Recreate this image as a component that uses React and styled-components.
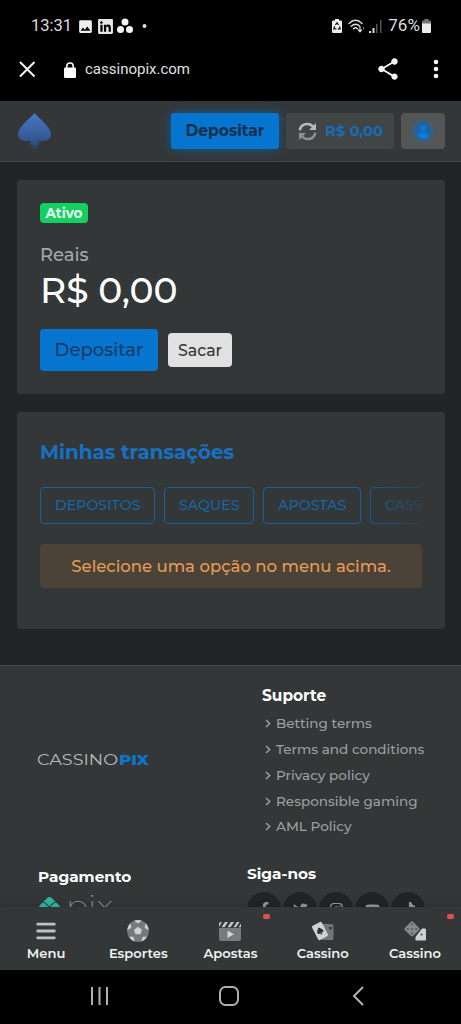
import React from 'react';
import styled, { createGlobalStyle } from 'styled-components';
import { FaFacebookF, FaTwitter, FaInstagram, FaYoutube, FaTiktok, FaLinkedin } from 'react-icons/fa';
import { FaPix } from 'react-icons/fa6';
import { MdImage, MdShare } from 'react-icons/md';

const Global = createGlobalStyle`
  *, *::before, *::after { box-sizing: border-box; }
  body { margin: 0; background: #000; overflow: hidden; }
  button { border: 0; padding: 0; font: inherit; color: inherit; white-space: nowrap; }
  h2, h3, p, ul { margin: 0; padding: 0; font: inherit; }
  svg { display: block; flex: none; }
`;

const Screen = styled.div`
  width: 461px;
  height: 1024px;
  display: flex;
  flex-direction: column;
  overflow: hidden;
  background: #212526;
  font-family: Montserrat, Inter, sans-serif;
`;

const Text = styled.span`
  display: block;
  flex: none;
  white-space: nowrap;
  font-size: ${(p) => p.$size}px;
  font-weight: ${(p) => p.$weight || 500};
  color: ${(p) => p.$color || 'inherit'};
  line-height: ${(p) => p.$line || p.$size * 1.25}px;
  letter-spacing: ${(p) => p.$track || 0}px;
`;

const StatusBar = styled.div`
  height: 41px;
  flex: none;
  padding: 11px 30px 0 31px;
  display: flex;
  align-items: center;
  background: #000;
  color: #dcdcdc;
  font-family: Roboto, sans-serif;
`;
const StatusIcons = styled.div`
  display: flex;
  align-items: center;
  gap: 3px;
  margin-left: 5px;
  flex: 1;
`;
const StatusRight = styled.div`
  display: flex;
  align-items: center;
  gap: 6px;
`;
const BatteryIcon = styled.svg`
  margin-left: -4px;
`;
const SignalIcon = styled.svg`
  margin-left: -2px;
`;
const UrlBar = styled.div`
  height: 60px;
  flex: none;
  padding: 0 20px 4px 18px;
  display: flex;
  align-items: center;
  background: #000;
  color: #e0e0e0;
  font-family: Roboto, sans-serif;
`;
const Address = styled.div`
  display: flex;
  align-items: center;
  gap: 9px;
  flex: 1;
  margin-left: 28px;
  padding-top: 1px;
`;
const UrlActions = styled.div`
  display: flex;
  align-items: center;
  gap: 30px;
`;

const Header = styled.header`
  height: 61px;
  flex: none;
  padding: 0 16px 0 17px;
  display: flex;
  align-items: center;
  gap: 7px;
  background: #333738;
  border-bottom: 1px solid #46494a;
`;
const Brand = styled.div`
  flex: 1;
`;
const DepositTop = styled.button`
  width: 108px;
  height: 36px;
  display: grid;
  place-items: center;
  border-radius: 3px;
  background: #0675d0;
  color: #16304b;
  box-shadow: 0 0 11px rgba(0, 119, 215, 0.55);
`;
const Balance = styled.div`
  width: 108px;
  height: 36px;
  padding-left: 12px;
  display: flex;
  align-items: center;
  gap: 8px;
  border-radius: 3px;
  background: #424545;
`;
const Profile = styled.button`
  width: 44px;
  height: 36px;
  display: grid;
  place-items: center;
  border-radius: 4px;
  background: #545656;
`;
const Glow = styled.svg`
  filter: drop-shadow(0 0 3px #0077d7) blur(0.6px);
`;

const Main = styled.main`
  height: 503px;
  flex: none;
  padding: 18px 16px 0 17px;
  display: flex;
  flex-direction: column;
  gap: 18px;
`;
const Card = styled.section`
  height: ${(p) => p.$height}px;
  padding: 24px 23px 0 23px;
  display: flex;
  flex-direction: column;
  background: #333738;
  border-radius: 4px;
`;
const Badge = styled.span`
  width: 48px;
  height: 20px;
  flex: none;
  display: grid;
  place-items: center;
  border-radius: 4px;
  background: #14cf62;
  margin: -1px 0 21px;
`;
const Actions = styled.div`
  display: flex;
  align-items: center;
  gap: 10px;
  margin-top: 15px;
`;
const ActionButton = styled.button`
  width: ${(p) => (p.$primary ? 118 : 64)}px;
  height: ${(p) => (p.$primary ? 42 : 34)}px;
  display: grid;
  place-items: center;
  border-radius: 4px;
  background: ${(p) => (p.$primary ? '#0675d0' : '#e1e1e1')};
  color: ${(p) => (p.$primary ? '#173c66' : '#333738')};
`;
const Tabs = styled.div`
  display: flex;
  gap: 9px;
  overflow: hidden;
  margin-top: 18px;
  flex: none;
  mask-image: linear-gradient(to right, #000 84%, transparent 104%);
`;
const Tab = styled.button`
  width: ${(p) => p.$width}px;
  height: 37px;
  flex: none;
  display: grid;
  place-items: center;
  border: 1px solid #175f9d;
  border-radius: 4px;
  background: transparent;
  color: #1766aa;
`;
const Notice = styled.div`
  height: 44px;
  margin-top: 20px;
  display: grid;
  place-items: center;
  border-radius: 4px;
  background: #4b4238;
  color: #e59b56;
`;

const Footer = styled.footer`
  height: 242px;
  flex: none;
  overflow: hidden;
  border-top: 1px solid #46494a;
  background: #333738;
`;
const FooterTop = styled.div`
  height: 196px;
  display: flex;
  padding-left: 37px;
`;
const LogoCell = styled.div`
  width: 225px;
  padding-top: 85px;
`;
const Support = styled.div`
  padding-top: 20px;
`;
const Links = styled.ul`
  list-style: none;
  margin-top: 5px;
`;
const LinkItem = styled.li`
  height: 25.75px;
  padding-left: 3px;
  display: flex;
  align-items: center;
  gap: 5px;
  color: #9c9fa0;
`;
const FooterBottom = styled.div`
  display: flex;
  padding-left: 38px;
`;
const Payment = styled.div`
  width: 209px;
  padding-top: 5px;
`;
const PixLogo = styled.div`
  display: flex;
  gap: 6px;
  margin-top: 10px;
  padding-left: 1px;
  color: #30b9a4;
`;
const Follow = styled.div`
  padding-top: 2px;
`;
const Socials = styled.div`
  display: flex;
  gap: 2px;
  margin-top: 8px;
`;
const Social = styled.a`
  width: 34px;
  height: 34px;
  display: grid;
  place-items: center;
  border-radius: 50%;
  background: #212526;
  color: #97999a;
`;

const BottomNav = styled.nav`
  height: 63px;
  flex: none;
  display: grid;
  grid-template-columns: repeat(5, 1fr);
  background: #333738;
  box-shadow: 0 -2px 10px rgba(0, 0, 0, 0.14);
  position: relative;
`;
const NavItem = styled.div`
  position: relative;
  display: flex;
  flex-direction: column;
  align-items: center;
  gap: 3px;
  padding-top: 12px;
  color: #f1f1f1;
`;
const Dot = styled.i`
  position: absolute;
  top: 7px;
  right: 7px;
  width: 7px;
  height: 5px;
  border-radius: 2px;
  background: #e05147;
`;
const SystemNav = styled.div`
  height: 54px;
  flex: none;
  padding: 16px 97px 0 90px;
  display: flex;
  justify-content: space-between;
  background: #000;
`;
const HomeIcon = styled.svg`
  margin-right: 5px;
`;

const Spade = () => (
  <svg width="34" height="38" viewBox="0 0 34 38">
    <defs>
      <linearGradient id="spade" x1="0" y1="0" x2="0" y2="1">
        <stop offset="0" stopColor="#4778c9" />
        <stop offset="0.75" stopColor="#34568f" />
        <stop offset="1" stopColor="#263f66" />
      </linearGradient>
    </defs>
    <path fill="url(#spade)" d="M17.500 1C14 6 2 13.500 1 22C.5 28 8 30.500 14.500 28.500C12.500 30 12.500 32.500 14.500 33.500C15.500 34.500 15 35.500 14.500 36.500H20.500C20 35.500 19.500 34.500 20.500 33.500C22.500 32.500 22.500 30 20.500 28.500C27 30.500 34.500 28 34 22C33 13.500 21 6 17.500 1Z" />
  </svg>
);

const MenuIcon = () => (
  <svg width="24" height="24" viewBox="0 0 24 24" stroke="#bfc1c1" strokeWidth="2.800" strokeLinecap="round">
    <path d="M3.700 5.200H20.300M3.700 12H20.300M3.700 18.800H20.300" />
  </svg>
);
const BallIcon = () => (
  <svg width="24" height="24" viewBox="0 0 24 24">
    <circle cx="12" cy="12" r="10.900" fill="#74797a" />
    <g fill="#cfd1d1">
      <path d="M12 7.800L16 10.700L14.500 15.300H9.500L8 10.700Z" />
      <path d="M8.200 1.800Q12 .3 15.800 1.800L12 4.600Z" />
      <path d="M1.200 11.200Q1.400 7.200 4.300 4.300L5.400 8.700Z" />
      <path d="M22.800 11.200Q22.600 7.200 19.700 4.300L18.600 8.700Z" />
      <path d="M2.900 17.800Q5 21.300 8.700 22.400L7.400 17.800Z" />
      <path d="M21.100 17.800Q19 21.300 15.300 22.400L16.600 17.800Z" />
    </g>
  </svg>
);
const ClapIcon = () => (
  <svg width="24" height="24" viewBox="0 0 24 24">
    <path fill="#777b7b" d="M1 9H23V20Q23 22 21 22H3Q1 22 1 20Z" />
    <path fill="#c8caca" d="M1 8V5Q1 3 3 3H4L1 8ZM7 3H10L6.500 8.200H3.500ZM13 3H16L12.500 8.200H9.500ZM19 3H21.500L18 8.200H15.500ZM23 4.500V8.200H20.500Z" />
    <path fill="#d3d5d5" d="M9.500 11.500L16 15.300L9.500 19Z" />
  </svg>
);
const CardsIcon = () => (
  <svg width="24" height="24" viewBox="0 0 24 24">
    <rect x="10" y="5" width="12.500" height="16" rx="1.500" fill="#717576" />
    <path d="M19.500 10.700C17.800 9.500 17.300 8.700 18.200 8.100C18.800 7.700 19.400 8.200 19.500 8.600C19.700 8.100 20.300 7.700 20.900 8.100C21.700 8.700 21.200 9.500 19.500 10.700Z" fill="#303435" />
    <g transform="rotate(-27 9 12)">
      <rect x="3.500" y="4" width="11" height="16" rx="1.500" fill="#d0d2d2" />
      <path d="M9 8.200C8 9.800 5.700 11 5.700 12.800C5.700 14.500 7.800 14.700 8.600 13.700L8 15.600H10L9.400 13.700C10.200 14.700 12.300 14.500 12.300 12.800C12.300 11 10 9.800 9 8.200Z" fill="#303435" />
    </g>
  </svg>
);
const DiceIcon = () => (
  <svg width="24" height="24" viewBox="0 0 24 24">
    <rect x="3.200" y="4.200" width="11.500" height="11.500" rx="1.400" transform="rotate(45 8.950 10)" fill="#85898a" />
    <g fill="#505556">
      <circle cx="9" cy="5.500" r="1" /><circle cx="4.800" cy="10" r="1" /><circle cx="9" cy="10" r="1" />
      <circle cx="13.200" cy="10" r="1" /><circle cx="9" cy="14.500" r="1" />
    </g>
    <path fill="#cfd1d1" d="M19 9.500H22Q23 9.500 23 10.500V20.500Q23 21.500 22 21.500H12.500V18Z" />
    <circle cx="18.500" cy="15.500" r="1" fill="#44494a" />
  </svg>
);

const tabs = [
  { label: 'DEPOSITOS', width: 115 },
  { label: 'SAQUES', width: 90 },
  { label: 'APOSTAS', width: 98 },
  { label: 'CASSINO', width: 95 },
];
const links = ['Betting terms', 'Terms and conditions', 'Privacy policy', 'Responsible gaming', 'AML Policy'];
const socials = [FaFacebookF, FaTwitter, FaInstagram, FaYoutube, FaTiktok];
const nav = [
  { label: 'Menu', Icon: MenuIcon },
  { label: 'Esportes', Icon: BallIcon },
  { label: 'Apostas', Icon: ClapIcon, dot: true },
  { label: 'Cassino', Icon: CardsIcon },
  { label: 'Cassino', Icon: DiceIcon, dot: true },
];

export default function App() {
  return (
    <Screen>
      <Global />
      <StatusBar>
        <Text $size={16.5} $weight={400}>13:31</Text>
        <StatusIcons>
          <MdImage size={17} color="#eee" />
          <FaLinkedin size={17} color="#e6e6e6" />
          <svg width="16" height="16" viewBox="0 0 16 16" fill="#f5f5f5">
            <circle cx="8" cy="4" r="3.500" /><circle cx="3.500" cy="11.500" r="3.500" /><circle cx="12.500" cy="11.500" r="3.500" />
          </svg>
          <svg width="14" height="16" viewBox="0 0 14 16" fill="currentColor"><circle cx="8.500" cy="8" r="2" /></svg>
        </StatusIcons>
        <StatusRight>
          <svg width="10" height="14" viewBox="0 0 10 14">
            <path fill="#eee" d="M3 0H7V1.500H9Q10 1.500 10 2.500V13Q10 14 9 14H1Q0 14 0 13V2.500Q0 1.500 1 1.500H3Z" />
            <path d="M3.400 6L5 3.800L6.600 6M7.500 7.300L8.200 9.800H5.800M4.300 9.800H1.800L2.700 7.300" fill="none" stroke="#111" strokeWidth="1.200" />
          </svg>
          <svg width="17" height="14" viewBox="0 0 17 14" fill="none" stroke="currentColor" strokeWidth="1.400" strokeLinecap="round">
            <path d="M1 4.500Q7.500-2 14 4.500M3.200 7.300Q7.500 3 11.800 7.300M5.500 9.700Q7.500 8 9.500 9.700" />
            <path d="M12 8V12.500M10.500 11L12 12.800L13.500 11" strokeWidth="1.200" />
            <path d="M15.500 10V8" stroke="#777" strokeWidth="1.200" />
          </svg>
          <SignalIcon width="13" height="13" viewBox="0 0 13 13" fill="currentColor">
            <path d="M0 11H2V13H0ZM3.500 8H5.500V13H3.500Z" />
            <path fill="#555" d="M7 4H8.500V13H7ZM11 0H12.500V13H11Z" />
          </SignalIcon>
          <Text $size={17} $weight={400} $track={0.1}>76%</Text>
          <BatteryIcon width="9" height="14" viewBox="0 0 9 14">
            <path fill="#777" d="M2.500 0H6.500V1.500H8Q9 1.500 9 2.500V6H0V2.500Q0 1.500 1 1.500H2.500Z" />
            <path fill="#eee" d="M0 4.500H9V13Q9 14 8 14H1Q0 14 0 13Z" />
          </BatteryIcon>
        </StatusRight>
      </StatusBar>

      <UrlBar>
        <svg width="18" height="18" viewBox="0 0 18 18" stroke="#f2f2f2" strokeWidth="2.100">
          <path d="M2 2L16.500 16.500M16.500 2L2 16.500" />
        </svg>
        <Address>
          <svg width="12" height="16" viewBox="0 0 12 16" fill="none">
            <path d="M2.800 7V4.200A3.200 3.200 0 0 1 9.200 4.200V7" stroke="#fff" strokeWidth="1.500" />
            <rect y="5.500" width="12" height="10.500" rx="1.300" fill="#fff" />
          </svg>
          <Text $size={15} $weight={400}>cassinopix.com</Text>
        </Address>
        <UrlActions>
          <MdShare size={26} color="#f5f5f5" />
          <svg width="10" height="20" viewBox="0 0 10 20" fill="#f5f5f5">
            <circle cx="5" cy="3" r="2.300" /><circle cx="5" cy="10" r="2.300" /><circle cx="5" cy="17" r="2.300" />
          </svg>
        </UrlActions>
      </UrlBar>

      <Header>
        <Brand><Spade /></Brand>
        <DepositTop><Text $size={15.5} $weight={700}>Depositar</Text></DepositTop>
        <Balance>
          <svg width="19" height="19" viewBox="0 0 19 19" fill="none" strokeWidth="2.600">
            <path d="M1.700 8.300Q3 2 9.500 2Q13 2 15.500 5" stroke="#b8baba" />
            <path d="M18 1V8H11Z" fill="#b8baba" />
            <path d="M17.300 10.700Q16 17 9.500 17Q6 17 3.500 14" stroke="#8d9090" />
            <path d="M1 18V11H8Z" fill="#8d9090" />
          </svg>
          <Text $size={14.8} $weight={700} $color="#176bb8">R$ 0,00</Text>
        </Balance>
        <Profile>
          <Glow width="18" height="18" viewBox="0 0 18 18">
            <circle cx="9" cy="9" r="8" fill="#1b62a6" />
            <circle cx="9" cy="6.500" r="3.200" fill="#0d76d4" />
            <path d="M3 14Q4 10.500 9 10.500Q14 10.500 15 14Q12.500 17 9 17Q5.500 17 3 14Z" fill="#087be0" />
          </Glow>
        </Profile>
      </Header>

      <Main>
        <Card $height={214}>
          <Badge><Text $size={13.5} $weight={700} $color="#e9fff1">Ativo</Text></Badge>
          <Text $size={18} $line={22} $color="#a4a8aa">Reais</Text>
          <Text $size={36} $line={48} $color="#fff">R$ 0,00</Text>
          <Actions>
            <ActionButton $primary><Text $size={18}>Depositar</Text></ActionButton>
            <ActionButton><Text $size={15.8} $line={21}>Sacar</Text></ActionButton>
          </Actions>
        </Card>
        <Card $height={217}>
          <Text as="h2" $size={19.9} $line={33} $weight={700} $color="#1671c3">Minhas transações</Text>
          <Tabs>
            {tabs.map((t) => (
              <Tab key={t.label} $width={t.width}><Text $size={14.2}>{t.label}</Text></Tab>
            ))}
          </Tabs>
          <Notice><Text $size={16.5}>Selecione uma opção no menu acima.</Text></Notice>
        </Card>
      </Main>

      <Footer>
        <FooterTop>
          <LogoCell>
            <svg width="114" height="18" viewBox="0 0 114 18" fontFamily="Montserrat, Inter, sans-serif" fontSize="15">
              <text x="0" y="14" fill="#b7babb" fontWeight="400" textLength="81" lengthAdjust="spacingAndGlyphs">CASSINO</text>
              <text x="82" y="14" fill="#0b75d0" fontWeight="800" textLength="30" lengthAdjust="spacingAndGlyphs">PIX</text>
            </svg>
          </LogoCell>
          <Support>
            <Text as="h3" $size={15.4} $line={20} $weight={700} $color="#fff">Suporte</Text>
            <Links>
              {links.map((label) => (
                <LinkItem key={label}>
                  <svg width="6" height="9" viewBox="0 0 6 9" fill="none" stroke="currentColor" strokeWidth="1.500"><path d="M1 1L4.700 4.500L1 8" /></svg>
                  <Text $size={13.55}>{label}</Text>
                </LinkItem>
              ))}
            </Links>
          </Support>
        </FooterTop>
        <FooterBottom>
          <Payment>
            <Text as="h3" $size={15.3} $line={20} $weight={700} $color="#fff">Pagamento</Text>
            <PixLogo>
              <FaPix size={21} />
              <svg width="48" height="30" viewBox="0 0 48 30" overflow="visible">
                <text x="0" y="18" fill="#8d9899" fontFamily="Montserrat, Inter, sans-serif" fontWeight="200" fontSize="27" textLength="47" lengthAdjust="spacingAndGlyphs">pix</text>
              </svg>
            </PixLogo>
          </Payment>
          <Follow>
            <Text as="h3" $size={15.3} $line={20} $weight={700} $color="#fff">Siga-nos</Text>
            <Socials>
              {socials.map((Icon, i) => <Social key={i}><Icon size={15} /></Social>)}
            </Socials>
          </Follow>
        </FooterBottom>
      </Footer>

      <BottomNav>
        {nav.map(({ label, Icon, dot }, i) => (
          <NavItem key={i}>
            <Icon />
            <Text $size={13.1} $weight={600} $line={14}>{label}</Text>
            {dot && <Dot />}
          </NavItem>
        ))}
      </BottomNav>

      <SystemNav>
        <svg width="20" height="20" viewBox="0 0 20 20" stroke="#b0b0b0" strokeWidth="2"><path d="M2 1V19M9.500 1V19M17 1V19" /></svg>
        <HomeIcon width="22" height="20" viewBox="0 0 22 20" fill="none" stroke="#b0b0b0" strokeWidth="2"><rect x="2" y="1" width="18" height="18" rx="5.500" /></HomeIcon>
        <svg width="12" height="20" viewBox="0 0 12 20" fill="none" stroke="#b0b0b0" strokeWidth="2"><path d="M11 1L2 10L11 19" /></svg>
      </SystemNav>
    </Screen>
  );
}
